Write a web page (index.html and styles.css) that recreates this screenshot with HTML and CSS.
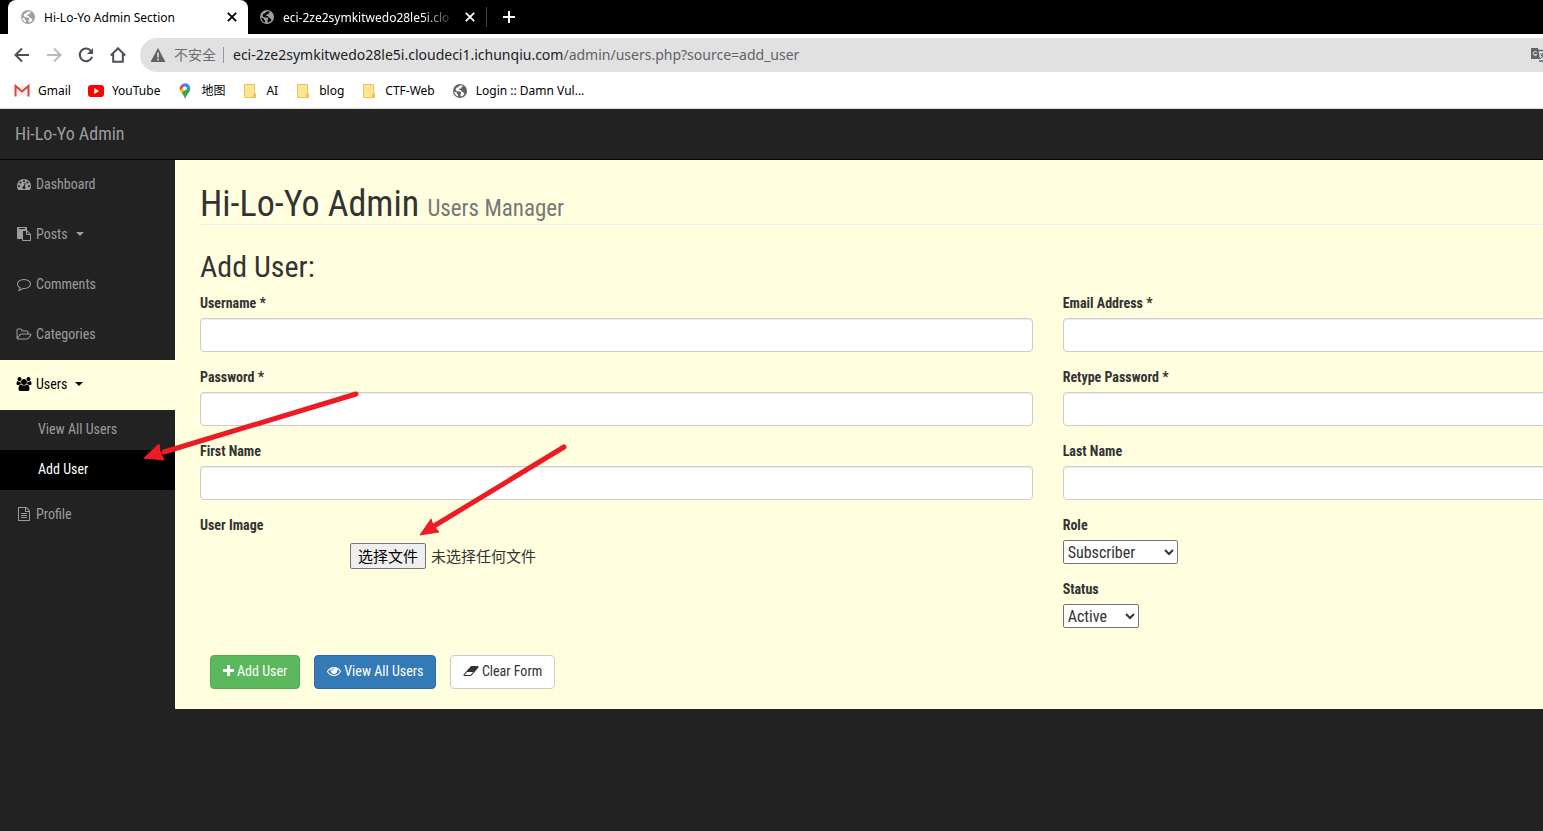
FILE: index.html
```html
<!DOCTYPE html>
<html lang="zh-CN">
<head>
<meta charset="utf-8">
<title>Hi-Lo-Yo Admin Section</title>
<link rel="stylesheet" href="styles.css">
</head>
<body>
<svg class="defs" aria-hidden="true">
  <symbol id="globe" viewBox="0 0 16 16"><circle cx="8" cy="8" r="7" fill="currentColor"/><path class="land" d="M8.500 2.200Q6 3 6.200 4.300L4.300 4.800 3.500 6.900 5 8.300 8.300 8.500 9.300 9.800 8.500 11.200 8.600 13.500Q11 13.200 12.500 11.300L11.500 9.500 9.700 8.600 9 7.200 6.800 6.800 7.600 5.600 9.400 5.300 9.700 3.800 11.400 3.300Q10 2.200 8.500 2.200zM2.200 8.500Q2.600 12 5.800 13.500L6.200 11.700 5 10.700 4.800 9.500z"/></symbol>
  <symbol id="close" viewBox="0 0 10 10"><path d="M1.500 1.500l7 7M8.500 1.500l-7 7" stroke="currentColor" stroke-width="1.500"/></symbol>
  <symbol id="folder" viewBox="0 0 14 16"><path d="M1.500 1.500h10v9h1v4h-11z" fill="#ffe594" stroke="#e9c64f"/><path d="M11.500 10.500v4M10.500 11v3.500" stroke="#e9c64f" fill="none"/></symbol>
</svg>

<header class="browser">
  <div class="tabs">
    <div class="tab tab-active">
      <svg class="globe"><use href="#globe"/></svg>
      <span class="tab-title">Hi-Lo-Yo Admin Section</span>
      <button class="tab-close" aria-label="关闭"><svg><use href="#close"/></svg></button>
    </div>
    <div class="tab">
      <svg class="globe"><use href="#globe"/></svg>
      <span class="tab-title tab-fade">eci-2ze2symkitwedo28le5i.clo</span>
      <button class="tab-close" aria-label="关闭"><svg><use href="#close"/></svg></button>
    </div>
    <span class="tab-rule"></span>
    <button class="tab-new" aria-label="新标签页"><svg viewBox="0 0 12 12"><path d="M6 0v12M0 6h12" stroke="currentColor" stroke-width="2"/></svg></button>
  </div>
  <div class="toolbar">
    <button class="tool" aria-label="后退"><svg viewBox="0 0 16 16"><path d="M15 8H2M8 1.500L1.500 8 8 14.500"/></svg></button>
    <button class="tool tool-off" aria-label="前进"><svg viewBox="0 0 16 16"><path d="M1 8h13M8 1.500L14.500 8 8 14.500"/></svg></button>
    <button class="tool" aria-label="刷新"><svg viewBox="0 0 16 16"><path d="M13.300 4.300A6.300 6.300 0 1 0 14.100 9.700"/><path d="M15 1v6H9z" class="solid"/></svg></button>
    <button class="tool" aria-label="主页"><svg viewBox="0 0 16 16"><path d="M.8 8.500L8 1.300l7.200 7.200M3.200 7v7.800h9.600V7"/></svg></button>
    <div class="omnibox">
      <svg class="warn" viewBox="0 0 16 14"><path d="M8 0l7.500 14H.5z" fill="#5f6368"/><path d="M8 4.500v5M8 10.500v2" stroke="#e1e1e1" stroke-width="1.600"/></svg>
      <span class="insecure">不安全</span>
      <span class="omni-rule"></span>
      <span class="url">eci-2ze2symkitwedo28le5i.cloudeci1.ichunqiu.com<span class="path">/admin/users.php?source=add_user</span></span>
      <svg class="translate" viewBox="0 0 16 16"><path d="M1 1h7l2 11H1z" fill="#5f6368"/><path d="M8 3.500h7.500v10.500H9" fill="none" stroke="#5f6368" stroke-width="1.400"/><path d="M7 5.500A2 2 0 1 0 7 7.500H5" fill="none" stroke="#e1e1e1"/><path d="M10 7h5M13 7q0 3-3 5M11 8l4 4" stroke="#5f6368" fill="none"/></svg>
    </div>
  </div>
  <nav class="bookmarks">
    <a href="#" class="mark"><svg class="fav" viewBox="0 0 16 16"><path d="M2 3h12v10H2z" fill="#eee"/><path d="M1.500 13.500V3l6.500 5.500L14.500 3v10.500" fill="none" stroke="#d9453a" stroke-width="2"/></svg>Gmail</a>
    <a href="#" class="mark"><svg class="fav" viewBox="0 0 16 16"><rect y="2" width="16" height="12" rx="3" fill="red"/><path d="M6.300 5v6l4.700-3z" fill="#fff"/></svg>YouTube</a>
    <a href="#" class="mark"><svg class="fav" viewBox="0 0 16 16"><path d="M8 16Q7.400 13 4.500 9.500L12.800 3.500Q14 6 12.500 8.500 9.200 12.500 8 16z" fill="#34a853"/><path d="M3 7.500L6 3.500 8 7.500 4.700 9.700Q3.500 8.600 3 7.500z" fill="#fbbc04"/><path d="M4 2Q2 4.500 3 7.500L7 3z" fill="#ea4335"/><path d="M4 2Q6.500-.5 10 .4 12 1.200 13 3.500L9.500 7 6.500 4z" fill="#4285f4"/><circle cx="8" cy="5.300" r="1.900" fill="#fff"/></svg>地图</a>
    <a href="#" class="mark"><svg class="fav"><use href="#folder"/></svg>AI</a>
    <a href="#" class="mark"><svg class="fav"><use href="#folder"/></svg>blog</a>
    <a href="#" class="mark"><svg class="fav"><use href="#folder"/></svg>CTF-Web</a>
    <a href="#" class="mark"><svg class="fav globe-dark"><use href="#globe"/></svg>Login :: Damn Vul...</a>
  </nav>
</header>

<div class="navbar"><a href="#" class="brand">Hi-Lo-Yo Admin</a></div>

<div class="wrapper">
  <nav class="sidebar">
    <a href="#" class="item"><svg class="fa" viewBox="0 0 1792 1792"><path d="M384 1152q0-53-37.500-90.500t-90.500-37.500-90.500 37.500-37.500 90.500 37.500 90.500 90.500 37.500 90.500-37.500 37.500-90.500zm192-448q0-53-37.500-90.500t-90.500-37.500-90.500 37.500-37.500 90.500 37.500 90.500 90.500 37.500 90.500-37.500 37.500-90.500zm428 481l101-382q6-26-7.500-48.500t-38.500-29.500-48 6.500-30 39.500l-101 382q-60 5-107 43.500t-63 98.500q-20 77 20 146t117 89 146-20 89-117q16-60-6-117t-72-91zm660-33q0-53-37.500-90.500t-90.500-37.500-90.500 37.500-37.500 90.500 37.500 90.500 90.500 37.500 90.500-37.500 37.500-90.500zm-640-640q0-53-37.500-90.500t-90.500-37.500-90.500 37.500-37.500 90.500 37.500 90.500 90.500 37.500 90.500-37.500 37.500-90.500zm448 192q0-53-37.500-90.500t-90.500-37.500-90.500 37.500-37.500 90.500 37.500 90.500 90.500 37.500 90.500-37.500 37.500-90.500zm320 448q0 261-141 483-19 29-54 29h-1402q-35 0-54-29-141-221-141-483 0-182 71-348t191-286 286-191 348-71 348 71 286 191 191 286 71 348z"/></svg>Dashboard</a>
    <a href="#" class="item"><svg class="fa" viewBox="0 0 1792 1792"><path d="M768 1664h896v-640h-416q-40 0-68-28t-28-68v-416h-384v1152zm256-1440v-64q0-13-9.500-22.500t-22.500-9.500h-704q-13 0-22.500 9.500t-9.500 22.500v64q0 13 9.500 22.500t22.500 9.500h704q13 0 22.500-9.500t9.500-22.500zm256 672h299l-299-299v299zm512 128v672q0 40-28 68t-68 28h-960q-40 0-68-28t-28-68v-160h-544q-40 0-68-28t-28-68v-1344q0-40 28-68t68-28h1088q40 0 68 28t28 68v328q21 13 36 28l408 408q28 28 48 76t20 88z"/></svg>Posts<span class="caret"></span></a>
    <a href="#" class="item"><svg class="fa" viewBox="0 0 1792 1792"><path d="M896 384q-204 0-381.500 69.500t-282 187.500-104.500 255q0 112 71.500 213.500t201.500 175.500l87 50-27 96q-24 91-70 172 152-63 275-171l43-38 57 6q69 8 130 8 204 0 381.500-69.500t282-187.500 104.500-255-104.500-255-282-187.500-381.500-69.500zm896 512q0 174-120 321.500t-326 233-450 85.500q-70 0-145-8-198 175-460 242-49 14-114 22h-5q-15 0-27-10.500t-16-27.500v-1q-3-4-.5-12t2-10 4.500-9.500l6-9 7-8.500 8-9q7-8 31-34.500t34.500-38 31-39.500 32.500-51 27-59 26-76q-157-89-247.500-220t-90.500-281q0-174 120-321.500t326-233 450-85.500 450 85.500 326 233 120 321.500z"/></svg>Comments</a>
    <a href="#" class="item"><svg class="fa" viewBox="0 0 1920 1792"><path d="M1781 1003q0-35-53-35h-1088q-40 0-85.500 21.500t-71.500 52.500l-294 363q-18 24-18 40 0 35 53 35h1088q40 0 86-22t71-53l294-363q18-22 18-39zm-1141-163h768v-160q0-40-28-68t-68-28h-576q-40 0-68-28t-28-68v-64q0-40-28-68t-68-28h-320q-40 0-68 28t-28 68v853l256-315q44-53 116-87.500t140-34.500zm1269 163q0 62-46 120l-295 363q-43 53-116 87.500t-140 34.500h-1088q-92 0-158-66t-66-158v-960q0-92 66-158t158-66h320q92 0 158 66t66 158v32h544q92 0 158 66t66 158v160h192q54 0 99 24.500t67 70.500q15 32 15 68z"/></svg>Categories</a>
    <a href="#" class="item item-open"><svg class="fa" viewBox="0 0 1920 1792"><path d="M593 896q-162 5-265 128h-134q-82 0-138-40.500t-56-118.500q0-353 124-353 6 0 43.500 21t97.500 42.500 119 21.500q67 0 133-23-5 37-5 66 0 139 81 256zm1071 637q0 120-73 189.500t-194 69.500h-874q-121 0-194-69.500t-73-189.500q0-53 3.500-103.500t14-109 26.500-108.500 43-97.500 62-81 85.500-53.500 111.500-20q10 0 43 21.500t73 48 107 48 135 21.500 135-21.500 107-48 73-48 43-21.500q61 0 111.500 20t85.500 53.500 62 81 43 97.500 26.500 108.500 14 109 3.500 103.500zm-1024-1277q0 106-75 181t-181 75-181-75-75-181 75-181 181-75 181 75 75 181zm704 384q0 159-112.500 271.500t-271.500 112.500-271.500-112.500-112.500-271.500 112.500-271.500 271.500-112.500 271.500 112.500 112.500 271.500zm576 225q0 78-56 118.500t-138 40.500h-134q-103-123-265-128 81-117 81-256 0-29-5-66 66 23 133 23 59 0 119-21.500t97.500-42.500 43.500-21q124 0 124 353zm-128-609q0 106-75 181t-181 75-181-75-75-181 75-181 181-75 181 75 75 181z"/></svg>Users<span class="caret"></span></a>
    <a href="#" class="sub">View All Users</a>
    <a href="#" class="sub sub-active">Add User</a>
    <a href="#" class="item"><svg class="fa" viewBox="0 0 1792 1792"><path d="M1596 380q28 28 48 76t20 88v1152q0 40-28 68t-68 28h-1344q-40 0-68-28t-28-68v-1600q0-40 28-68t68-28h896q40 0 88 20t76 48zm-444-244v376h376q-10-29-22-41l-313-313q-12-12-41-22zm384 1528v-1024h-416q-40 0-68-28t-28-68v-416h-768v1536h1280zm-1024-864q0-14 9-23t23-9h704q14 0 23 9t9 23v64q0 14-9 23t-23 9h-704q-14 0-23-9t-9-23v-64zm736 224q14 0 23 9t9 23v64q0 14-9 23t-23 9h-704q-14 0-23-9t-9-23v-64q0-14 9-23t23-9h704zm0 256q14 0 23 9t9 23v64q0 14-9 23t-23 9h-704q-14 0-23-9t-9-23v-64q0-14 9-23t23-9h704z"/></svg>Profile</a>
  </nav>

  <main class="content">
    <h1>Hi-Lo-Yo Admin <small>Users Manager</small></h1>
    <h2>Add User:</h2>
    <form>
      <div class="fields">
        <div class="field"><label for="username">Username *</label><input id="username" type="text"></div>
        <div class="field"><label for="email">Email Address *</label><input id="email" type="email"></div>
        <div class="field"><label for="password">Password *</label><input id="password" type="password"></div>
        <div class="field"><label for="retype">Retype Password *</label><input id="retype" type="password"></div>
        <div class="field"><label for="first">First Name</label><input id="first" type="text"></div>
        <div class="field"><label for="last">Last Name</label><input id="last" type="text"></div>
        <div class="field">
          <label for="image">User Image</label>
          <div class="file"><button type="button" id="image">选择文件</button><span>未选择任何文件</span></div>
        </div>
        <div class="stack">
          <div class="field"><label for="role">Role</label><select id="role" class="role"><option>Subscriber</option><option>Admin</option></select></div>
          <div class="field"><label for="status">Status</label><select id="status" class="status"><option>Active</option><option>Inactive</option></select></div>
        </div>
      </div>
      <div class="actions">
        <button type="submit" class="btn btn-green"><svg viewBox="0 0 1408 1792"><path d="M1408 736v192q0 40-28 68t-68 28H896v416q0 40-28 68t-68 28H608q-40 0-68-28t-28-68v-416H96q-40 0-68-28T0 928V736q0-40 28-68t68-28h416V224q0-40 28-68t68-28h192q40 0 68 28t28 68v416h416q40 0 68 28t28 68z"/></svg>Add User</button>
        <a href="#" class="btn btn-blue"><svg viewBox="0 0 1792 1792"><path d="M1664 960q-152-236-381-353 61 104 61 225 0 185-131.500 316.500t-316.500 131.500-316.500-131.500-131.500-316.500q0-121 61-225-229 117-381 353 133 205 333.500 326.500t434.500 121.500 434.500-121.500 333.500-326.500zm-720-384q0-20-14-34t-34-14q-125 0-214.500 89.500t-89.500 214.500q0 20 14 34t34 14 34-14 14-34q0-86 61-147t147-61q20 0 34-14t14-34zm848 384q0 34-20 69-140 230-376.500 368.500t-499.500 138.500-499.500-139-376.500-368q-20-35-20-69t20-69q140-229 376.500-368t499.500-139 499.500 139 376.500 368q20 35 20 69z"/></svg>View All Users</a>
        <button type="reset" class="btn btn-white"><svg viewBox="0 0 1984 1792"><path d="M960 1408l336-384h-768l-336 384h768zm1013-1077q15 34 9.500 71.500t-30.500 65.500l-896 1024q-38 44-96 44h-768q-38 0-69.500-20.500t-47.500-54.500q-15-34-9.500-71.500t30.500-65.500l896-1024q38-44 96-44h768q38 0 69.500 20.500t47.500 54.500z"/></svg>Clear Form</button>
      </div>
    </form>
  </main>
</div>

<svg class="arrows" viewBox="0 0 440 160" aria-hidden="true">
  <path d="M216 4L24 62M424 57L294 136" stroke="#ed1c24" stroke-width="5" stroke-linecap="round"/>
  <path d="M4 68L19 54 20 61 24 70zM280 145L291 129 293 135 299 142z" fill="#ed1c24" stroke="#ed1c24"/>
</svg>
</body>
</html>
```
FILE: styles.css
```css
* { box-sizing: border-box; }

body {
  margin: 0;
  min-height: 100vh;
  position: relative;
  overflow: hidden;
  background: #222;
  color: #333;
  font: 14px/20px "Roboto Condensed", "Liberation Sans Narrow", sans-serif;
}

a { color: inherit; text-decoration: none; }
button { font: inherit; color: inherit; }
.defs { position: absolute; width: 0; height: 0; }

/* Browser frame */
.browser {
  background: #fff;
  border-bottom: 1px solid #ddd;
  color: #000;
  font: 12px/16px "Noto Sans", "Noto Sans CJK SC", sans-serif;
}
.tabs {
  display: flex;
  align-items: center;
  height: 34px;
  padding-left: 8px;
  background: #000;
  color: #fff;
}
.tab {
  --land: #000;
  display: flex;
  align-items: center;
  gap: 8px;
  width: 238px;
  height: 34px;
  padding: 0 10px 0 11px;
}
.tab-active {
  --land: #fff;
  width: 240px;
  padding-left: 12px;
  background: #fff;
  color: #000;
  border-radius: 8px 8px 0 0;
}
.globe { width: 16px; height: 16px; color: #9aa0a6; flex: none; }
.land { fill: var(--land, #fff); }
.tab-title { flex: 1; padding-top: 2px; white-space: nowrap; }
.tab-fade {
  -webkit-mask-image: linear-gradient(90deg, #000 80%, transparent);
  mask-image: linear-gradient(90deg, #000 80%, transparent);
}
.tab-close, .tab-new, .tool { display: flex; padding: 0; border: 0; background: none; }
.tab-close svg { width: 12px; height: 12px; }
.tab-rule { width: 1px; height: 20px; margin-right: 16px; background: #444; }
.tab-new svg { width: 12px; height: 12px; }

.toolbar {
  display: flex;
  align-items: center;
  gap: 16px;
  padding: 4px 0 0 14px;
}
.tool svg { width: 16px; height: 16px; fill: none; stroke: #4d5156; stroke-width: 2; }
.tool .solid { fill: #4d5156; stroke: none; }
.tool-off svg { stroke: #b8babd; }
.omnibox {
  display: flex;
  align-items: center;
  flex: 1;
  min-width: 0;
  height: 34px;
  margin-left: -2px;
  padding-left: 10px;
  overflow: hidden;
  border-radius: 17px 0 0 17px;
  background: #e1e1e1;
  color: #202124;
  font-size: 14px;
  white-space: nowrap;
}
.warn { width: 16px; height: 14px; margin-right: 8px; }
.insecure { color: #6b6e72; }
.omni-rule { width: 1px; height: 16px; margin: 0 9px 0 7px; background: #999; }
.url { flex: 1; }
.path { color: #5f6368; }
.translate { width: 16px; height: 16px; margin-right: -3px; flex: none; }

.bookmarks { display: flex; align-items: center; gap: 17px; height: 36px; padding: 2px 0 0 14px; }
.mark { display: flex; align-items: center; gap: 8px; white-space: nowrap; }
.fav { width: 16px; height: 16px; }
.globe-dark { color: #5f6368; }

/* Admin page */
.navbar {
  display: flex;
  align-items: center;
  height: 51px;
  padding-left: 15px;
  background: #222;
  border-bottom: 1px solid #080808;
}
.brand { color: #9d9d9d; font-size: 18px; }

.wrapper { display: flex; align-items: flex-start; }
.sidebar { flex: none; width: 175px; color: #9d9d9d; }
.item { display: flex; align-items: center; height: 50px; padding: 0 0 2px 16px; }
.item-open { background: #ffffe0; color: #000; }
.fa { width: 16px; height: 14px; margin-right: 4px; fill: currentColor; }
.caret {
  margin-left: 8px;
  border: 4px solid transparent;
  border-top-color: currentColor;
  border-bottom: 0;
}
.sub { display: flex; align-items: center; height: 40px; padding: 0 0 2px 38px; }
.sub-active { background: #000; color: #fff; }

.content {
  flex: 1;
  min-width: 0;
  overflow: hidden;
  padding: 24px 0 20px 25px;
  background: #ffffe0;
}
h1 {
  margin: 0 0 25px;
  border-bottom: 1px solid #eee;
  font-size: 36px;
  font-weight: 400;
  line-height: 40px;
}
h1 small { color: #777; font-size: 23px; line-height: 24px; }
h2 { margin: 0 0 10px; font-size: 30px; font-weight: 400; line-height: 33px; }

/* The second column runs past the right edge of the window */
.fields { display: grid; grid-template-columns: 62% 62%; gap: 15px 30px; }
.field { display: flex; flex-direction: column; align-items: flex-start; gap: 5px; }
.stack { display: grid; gap: 15px; }
.field label { font-weight: 700; }
.field input {
  width: 100%;
  height: 34px;
  padding: 6px 12px;
  border: 1px solid #ccc;
  border-radius: 4px;
  background: #fff;
  box-shadow: inset 0 1px 1px rgba(0, 0, 0, .075);
}
.field select {
  height: 24px;
  border: 1px solid #767676;
  border-radius: 2px;
  background-color: #fff;
  color: #333;
  font: 16px/20px "Roboto Condensed", "Liberation Sans Narrow", sans-serif;
}
.role { width: 115px; }
.status { width: 76px; }
.file {
  display: flex;
  align-items: center;
  gap: 5px;
  padding: 3px 0 0 150px;
  font: 15px/20px "Noto Sans CJK SC", sans-serif;
}
.file button {
  height: 26px;
  padding: 0 7px;
  border: 1px solid #767676;
  border-radius: 2px;
  background: #efefef;
  color: #000;
}

.actions { display: flex; gap: 14px; padding: 27px 0 0 10px; }
.btn {
  display: flex;
  align-items: center;
  gap: 3px;
  height: 34px;
  padding: 0 12px 2px;
  border: 1px solid;
  border-radius: 4px;
}
.btn svg { height: 14px; fill: currentColor; }
.btn-green { background: #5cb85c; border-color: #4cae4c; color: #fff; }
.btn-blue { background: #337ab7; border-color: #2e6da4; color: #fff; }
.btn-white { background: #fff; border-color: #ccc; color: #333; }

/* Annotation arrows drawn over the page */
.arrows { position: absolute; left: 140px; top: 390px; width: 440px; height: 160px; pointer-events: none; }
```
